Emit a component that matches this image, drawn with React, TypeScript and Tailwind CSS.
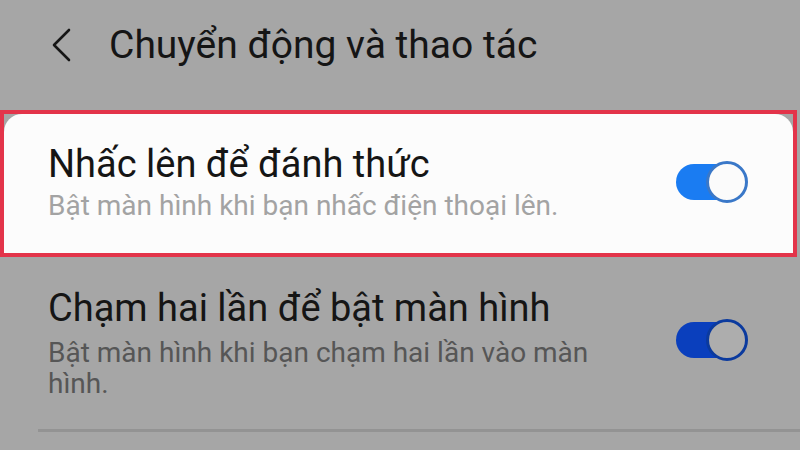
import React from "react";

function Toggle({ dark }: { dark?: boolean }) {
  return (
    <div className="relative h-[42px] w-[72px] shrink-0">
      <div
        className={
          "absolute left-0 top-[3px] h-[36px] w-[60px] rounded-l-full " +
          (dark ? "bg-[#0a3fbd]" : "bg-[#1a7cf2]")
        }
      />
      <div
        className={
          "absolute right-0 top-0 h-[42px] w-[42px] rounded-full border-[3px] " +
          (dark ? "border-[#0b3a9e] bg-[#adadad]" : "border-[#3a78c8] bg-[#fbfbfb]")
        }
      />
    </div>
  );
}

export default function App() {
  return (
    <div
      className="flex h-[450px] w-[800px] flex-col overflow-hidden bg-[#a6a6a6] text-[#151515]"
      style={{ fontFamily: "Roboto, 'Noto Sans', sans-serif" }}
    >
      <header className="flex h-[110px] shrink-0 items-center pb-[20px] pl-[51px]">
        <svg width="20" height="34" viewBox="0 0 20 34" fill="none">
          <path d="M18 2 L3 17 L18 32" stroke="#151515" strokeWidth="2.6" strokeLinecap="round" strokeLinejoin="round" />
        </svg>
        <h1 className="ml-[38px] text-[39px] leading-none">Chuyển động và thao tác</h1>
      </header>

      <section className="mr-[3px] h-[147px] shrink-0 border-4 border-[#e3344a] bg-[#a6a6a6]">
        <div className="flex h-full items-center justify-between rounded-t-[18px] bg-[#fcfcfc] pb-[4px] pl-[44px] pr-[45px]">
          <div>
            <div className="text-[38px] leading-[42px]">Nhấc lên để đánh thức</div>
            <div className="mt-[6px] text-[28px] leading-[30px] text-[#a3a3a3]">Bật màn hình khi bạn nhấc điện thoại lên.</div>
          </div>
          <Toggle />
        </div>
      </section>

      <section className="flex shrink-0 items-start justify-between pl-[48px] pr-[52px] pt-[30px]">
        <div className="w-[600px]">
          <div className="text-[38px] leading-[42px]">Chạm hai lần để bật màn hình</div>
          <div className="mt-[8px] text-[28px] leading-[31px] text-[#565656]">
            Bật màn hình khi bạn chạm hai lần vào màn hình.
          </div>
        </div>
        <div className="pt-[32px]">
          <Toggle dark />
        </div>
      </section>

      <div className="ml-[38px] mt-[30px] h-[3px] shrink-0 bg-[#939393]" />
    </div>
  );
}
